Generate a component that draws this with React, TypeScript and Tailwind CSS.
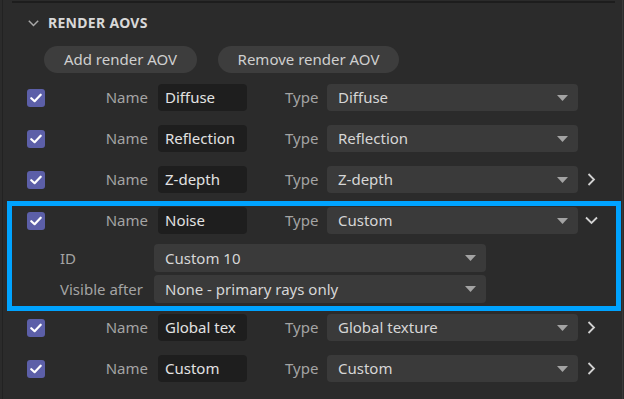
import type { ReactNode } from "react";

type Aov = {
  name: string;
  type: string;
  chevron?: "right" | "down";
};

const aovs: Aov[] = [
  { name: "Diffuse", type: "Diffuse" },
  { name: "Reflection", type: "Reflection" },
  { name: "Z-depth", type: "Z-depth", chevron: "right" },
  { name: "Noise", type: "Custom", chevron: "down" },
  { name: "Global tex", type: "Global texture", chevron: "right" },
  { name: "Custom", type: "Custom", chevron: "right" },
];

function Checkbox() {
  return (
    <div className="w-[18px] h-[18px] rounded-[3px] bg-[#5c5fa8] flex items-center justify-center shrink-0">
      <svg width="12" height="10" viewBox="0 0 12 10" fill="none">
        <path d="M1.3 5.2 L4.6 8.2 L10.7 1.7" stroke="#ffffff" strokeWidth="2.2" strokeLinecap="round" strokeLinejoin="round" />
      </svg>
    </div>
  );
}

function Triangle() {
  return (
    <svg width="11" height="6" viewBox="0 0 11 6" className="shrink-0">
      <path d="M0 0 H11 L5.5 6 Z" fill="#a3a3a3" />
    </svg>
  );
}

function Chevron({ dir }: { dir: "right" | "down" }) {
  if (dir === "down") {
    return (
      <svg width="13" height="9" viewBox="0 0 13 9" fill="none">
        <path d="M1 1.5 L6.5 7 L12 1.5" stroke="#d2d2d2" strokeWidth="1.8" />
      </svg>
    );
  }
  return (
    <svg width="9" height="13" viewBox="0 0 9 13" fill="none">
      <path d="M1.5 1 L7 6.5 L1.5 12" stroke="#d2d2d2" strokeWidth="1.8" />
    </svg>
  );
}

function Select({ value, className }: { value: string; className: string }) {
  return (
    <div className={`bg-[#3a3a3a] rounded-[4px] flex items-center justify-between pl-[11px] pr-[10px] text-[#d6d6d6] ${className}`}>
      <span>{value}</span>
      <Triangle />
    </div>
  );
}

function AovRow({ aov }: { aov: Aov }) {
  return (
    <div className="h-[41px] flex items-center pl-[27px]">
      <Checkbox />
      <div className="w-[103px] text-right text-[#a4a4a4]">Name</div>
      <div className="ml-[10px] w-[89px] h-[27px] bg-[#1e1e1e] rounded-[4px] flex items-center pl-[7px] text-[#e2e2e2] overflow-hidden whitespace-nowrap">
        {aov.name}
      </div>
      <div className="ml-[38px] w-[42px] text-[#a4a4a4]">Type</div>
      <Select value={aov.type} className="w-[251px] h-[27px]" />
      <div className="ml-[7px] w-[13px] flex justify-center">
        {aov.chevron && <Chevron dir={aov.chevron} />}
      </div>
    </div>
  );
}

function SubRow({ label, children }: { label: string; children: ReactNode }) {
  return (
    <div className="h-[28px] flex items-center pl-[60px]">
      <div className="w-[94px] text-[#a4a4a4]">{label}</div>
      {children}
    </div>
  );
}

export default function App() {
  return (
    <div
      className="w-[624px] h-[399px] bg-[#2b2b2b] overflow-hidden relative text-[15px] leading-none"
      style={{ fontFamily: '"Noto Sans", "Open Sans", sans-serif' }}
    >
      <div className="absolute left-[2px] top-0 bottom-0 w-[1px] bg-[#222222]" />
      <div className="absolute right-[1px] top-0 bottom-0 w-[1px] bg-[#3a3a3a]" />

      <div className="h-[1px]" />
      <div className="ml-[12px] w-[603px] h-[2px] bg-[#1d1d1d]" />

      <div className="h-[40px] flex items-center pl-[28px] gap-[9px]">
        <svg width="11" height="7" viewBox="0 0 11 7" fill="none">
          <path d="M0.8 0.8 L5.5 5.5 L10.2 0.8" stroke="#a8a8a8" strokeWidth="1.5" />
        </svg>
        <span className="text-[14px] font-bold text-[#d8d8d8] tracking-[0.3px]">RENDER AOVS</span>
      </div>

      <div className="mt-[3px] flex pl-[44px] gap-[21px]">
        <div className="w-[153px] h-[27px] rounded-full bg-[#3d3d3d] flex items-center justify-center text-[#cfcfcf]">
          Add render AOV
        </div>
        <div className="w-[181px] h-[27px] rounded-full bg-[#3d3d3d] flex items-center justify-center text-[#cfcfcf]">
          Remove render AOV
        </div>
      </div>

      <div className="mt-[4px]">
        {aovs.slice(0, 3).map((a) => (
          <AovRow key={a.name} aov={a} />
        ))}

        <div className="relative">
          <AovRow aov={aovs[3]} />
          <div className="mt-[3px]">
            <SubRow label="ID">
              <Select value="Custom 10" className="w-[332px] h-[28px]" />
            </SubRow>
          </div>
          <div className="mt-[3px]">
            <SubRow label="Visible after">
              <Select value="None - primary rays only" className="w-[332px] h-[28px]" />
            </SubRow>
          </div>
          <div className="absolute left-[7px] top-[1px] w-[614px] h-[110px] border-[5px] border-[#00a3ff] pointer-events-none" />
        </div>

        <div className="mt-[4px]">
          {aovs.slice(4).map((a) => (
            <AovRow key={a.name} aov={a} />
          ))}
        </div>
      </div>
    </div>
  );
}
